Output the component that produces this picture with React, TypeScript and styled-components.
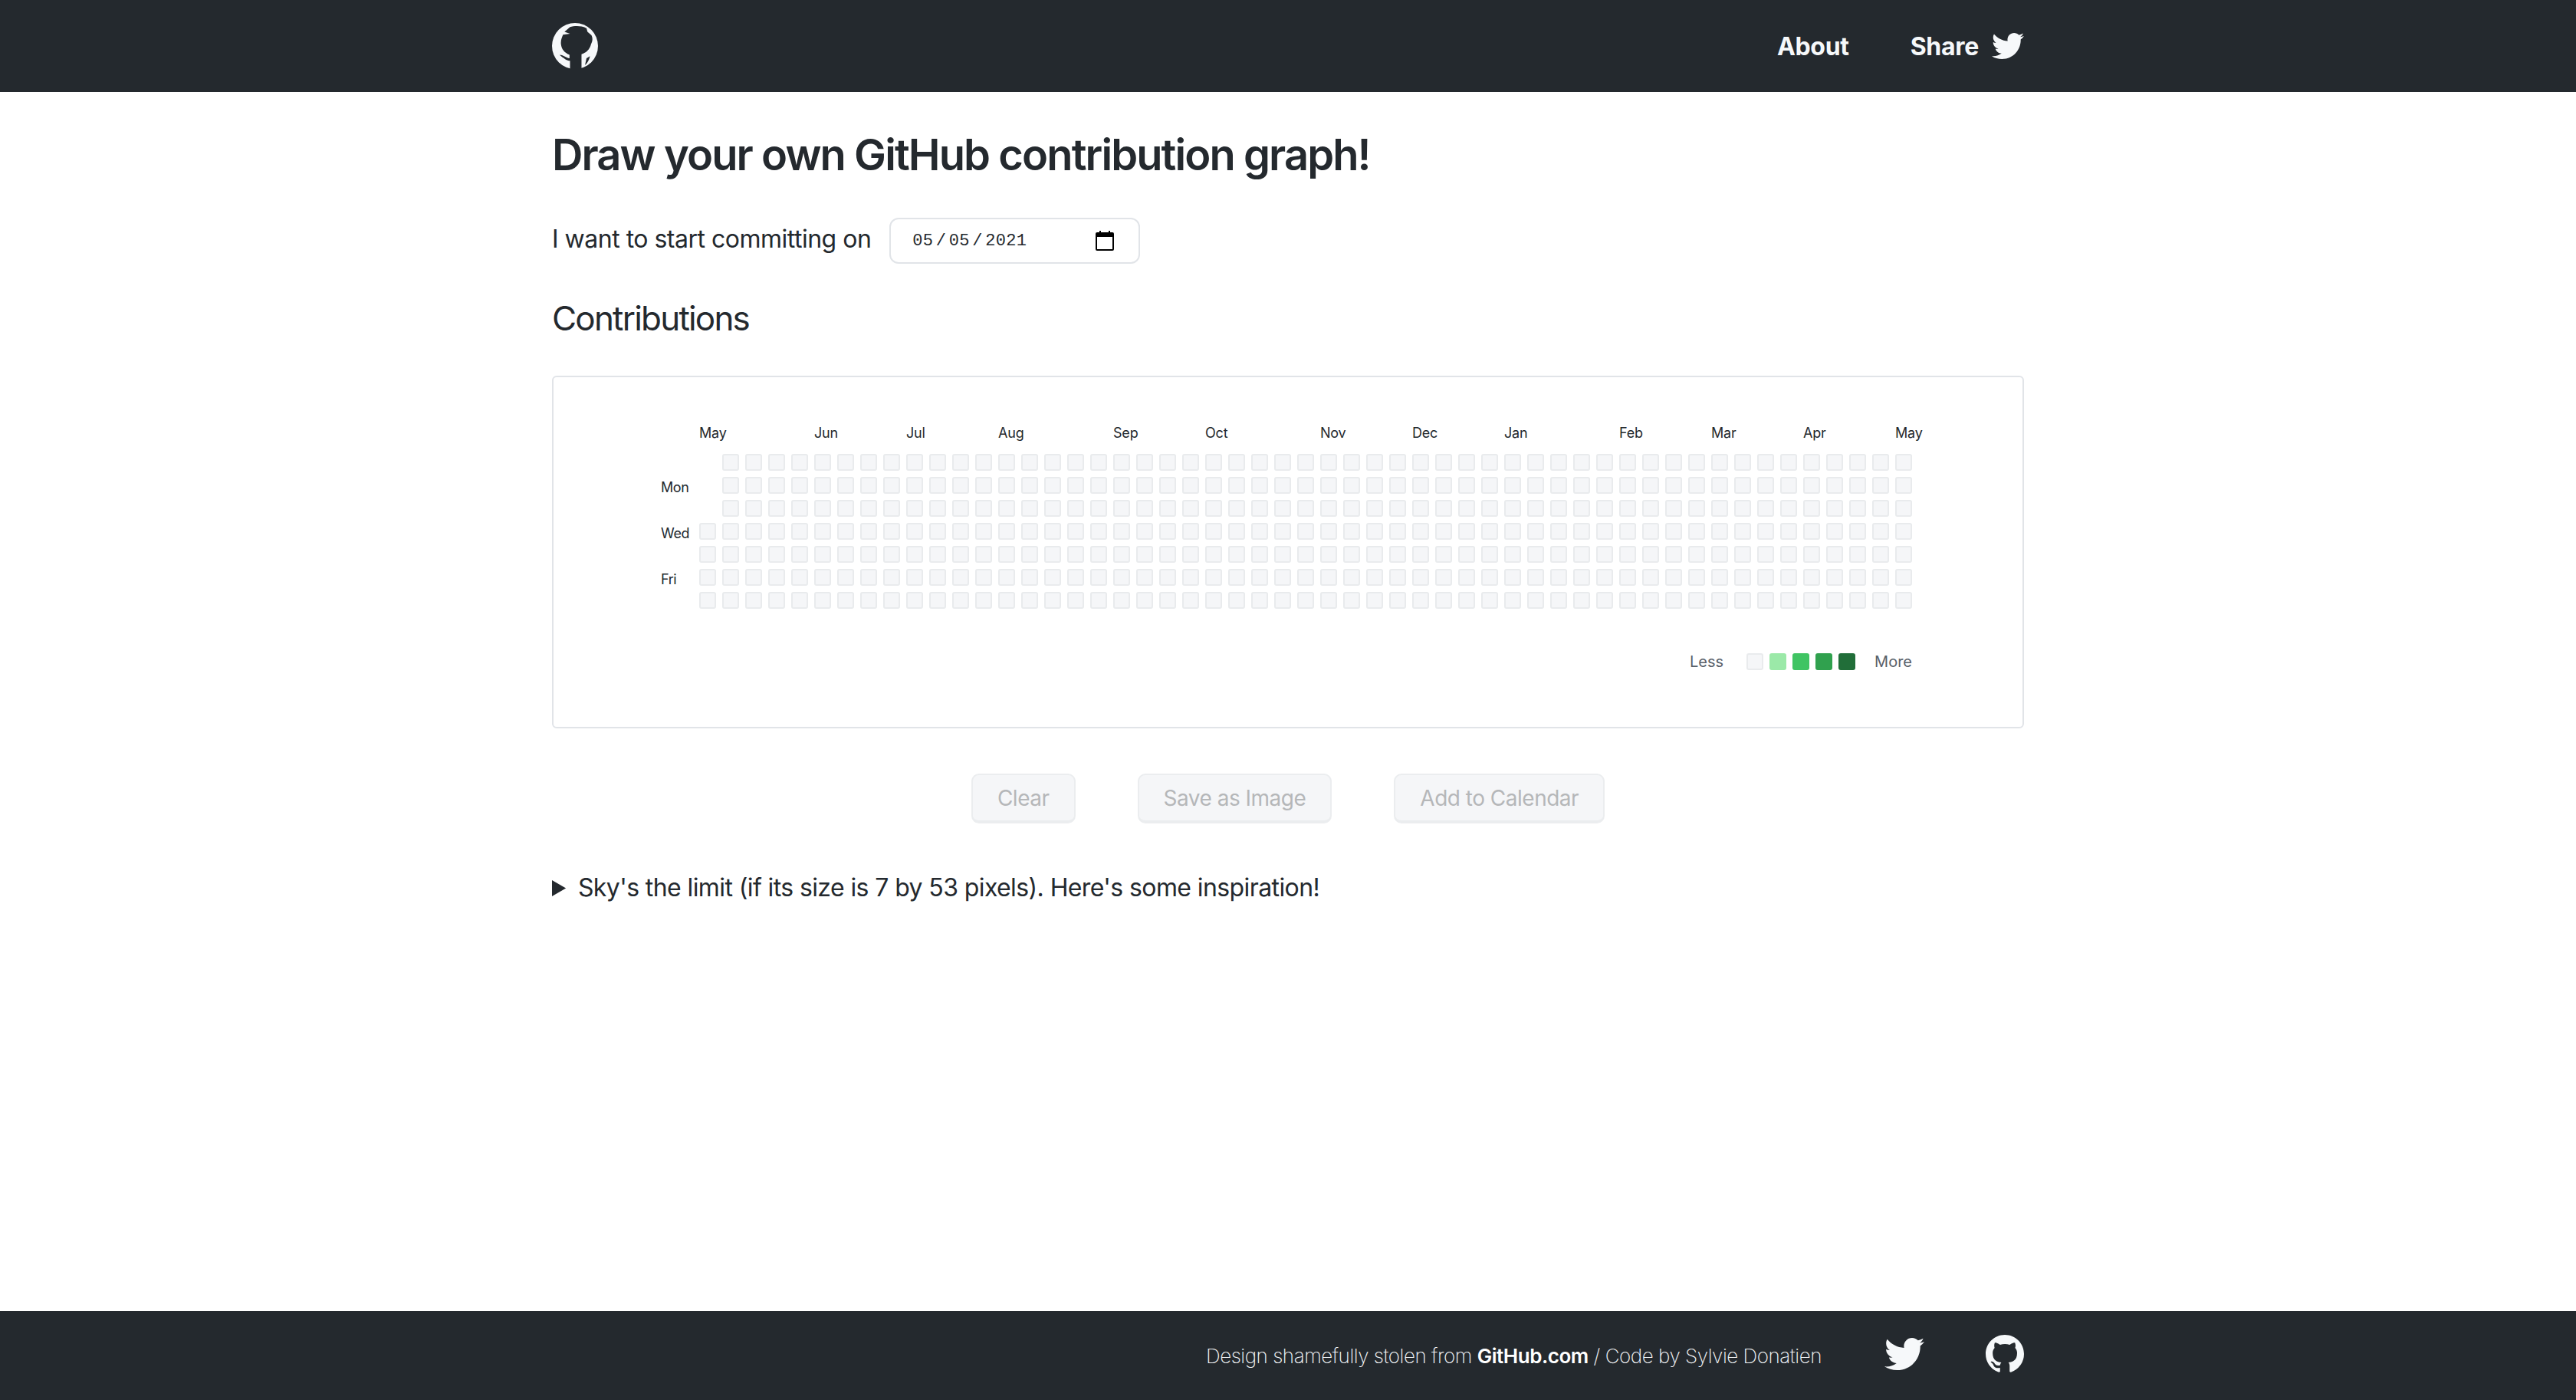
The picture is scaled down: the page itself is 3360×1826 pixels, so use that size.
import React from 'react';
import styled, { createGlobalStyle } from 'styled-components';
import { FaTwitter } from 'react-icons/fa';

const GITHUB_MARK =
  'M8 0C3.58 0 0 3.58 0 8c0 3.54 2.29 6.53 5.47 7.59.4.07.55-.17.55-.38 0-.19-.01-.82-.01-1.49-2.01.37-2.53-.49-2.69-.94-.09-.23-.48-.94-.82-1.13-.28-.15-.68-.52-.01-.53.63-.01 1.08.58 1.23.82.72 1.21 1.87.87 2.33.66.07-.52.28-.87.51-1.07-1.78-.2-3.64-.89-3.64-3.95 0-.87.31-1.59.82-2.15-.08-.2-.36-1.02.08-2.12 0 0 .67-.21 2.2.82.64-.18 1.32-.27 2-.27.68 0 1.36.09 2 .27 1.53-1.04 2.2-.82 2.2-.82.44 1.1.16 1.92.08 2.12.51.56.82 1.27.82 2.15 0 3.07-1.87 3.75-3.65 3.95.29.25.54.73.54 1.48 0 1.07-.01 1.93-.01 2.2 0 .21.15.46.55.38A8.013 8.013 0 0016 8c0-4.42-3.58-8-8-8z';

const MONTHS: { label: string; column: number }[] = [
  { label: 'May', column: 0 },
  { label: 'Jun', column: 5 },
  { label: 'Jul', column: 9 },
  { label: 'Aug', column: 13 },
  { label: 'Sep', column: 18 },
  { label: 'Oct', column: 22 },
  { label: 'Nov', column: 27 },
  { label: 'Dec', column: 31 },
  { label: 'Jan', column: 35 },
  { label: 'Feb', column: 40 },
  { label: 'Mar', column: 44 },
  { label: 'Apr', column: 48 },
  { label: 'May', column: 52 },
];

const DAY_LABELS = ['', 'Mon', '', 'Wed', '', 'Fri', ''];
const LEGEND = ['#f5f6f8', '#9be9a8', '#40c463', '#30a14e', '#216e39'];
const CELL_COUNT = 4 + 52 * 7;

const GlobalStyle = createGlobalStyle`
  html, body {
    margin: 0;
    padding: 0;
    background: #ffffff;
  }

  body {
    font-family: Inter, "Liberation Sans", sans-serif;
    color: #24292e;
  }
`;

const Page = styled.div`
  display: flex;
  flex-direction: column;
  height: 100vh;
  overflow: hidden;
`;

const Wrap = styled.div`
  width: 1920px;
  margin: 0 auto;
`;

const Header = styled.header`
  flex: none;
  height: 120px;
  background: #24292e;
  color: #f6f8fa;
`;

const HeaderInner = styled(Wrap)`
  height: 100%;
  display: flex;
  align-items: center;
  justify-content: space-between;
`;

const Nav = styled.nav`
  display: flex;
  align-items: center;
  gap: 80px;
`;

const NavLink = styled.a`
  display: flex;
  align-items: center;
  gap: 17px;
  font-size: 32px;
  font-weight: 700;
  letter-spacing: -0.3px;
  color: #f6f8fa;
`;

const Main = styled(Wrap)`
  flex: 1;
`;

const Title = styled.h1`
  margin: 42px 0 0;
  font-size: 56px;
  line-height: 80px;
  font-weight: 600;
  letter-spacing: -1.9px;
`;

const DateRow = styled.div`
  display: flex;
  align-items: center;
  gap: 24px;
  margin-top: 42px;
  font-size: 32px;
  letter-spacing: -0.5px;
`;

const DateLabel = styled.label`
  margin-bottom: 6px;
`;

const DateBox = styled.div`
  box-sizing: border-box;
  width: 327px;
  height: 60px;
  padding: 0 32px 0 28px;
  display: flex;
  align-items: center;
  justify-content: space-between;
  background: #ffffff;
  border: 2px solid #e1e4e8;
  border-radius: 12px;
`;

const DateValue = styled.span`
  font-family: "Liberation Mono", monospace;
  font-size: 22px;
  letter-spacing: 0.3px;
`;

const DateSlash = styled.span`
  margin: 0 3.5px;
`;

const SectionTitle = styled.h2`
  margin: 38px 0 0;
  font-size: 44px;
  line-height: 66px;
  font-weight: 400;
  letter-spacing: -1.8px;
`;

const Card = styled.div`
  box-sizing: border-box;
  height: 460px;
  margin-top: 42px;
  padding: 62px 0 0 140px;
  border: 2px solid #e1e4e8;
  border-radius: 6px;
`;

const Graph = styled.div`
  display: grid;
  grid-template-columns: 42px repeat(53, 22px);
  grid-template-rows: 30px repeat(7, 22px);
  gap: 8px;
  width: max-content;
`;

const MonthLabel = styled.span<{ $column: number }>`
  grid-row: 1;
  grid-column: ${p => p.$column + 2} / span 3;
  font-size: 18px;
  line-height: 22px;
  letter-spacing: -0.2px;
  white-space: nowrap;
`;

const DayLabel = styled.span<{ $row: number }>`
  grid-column: 1;
  grid-row: ${p => p.$row + 2};
  padding-top: 3px;
  font-size: 18px;
  line-height: 22px;
  letter-spacing: -0.4px;
`;

const CellGrid = styled.div`
  grid-column: 2 / span 53;
  grid-row: 2 / span 7;
  display: grid;
  grid-template-rows: repeat(7, 22px);
  grid-auto-flow: column;
  grid-auto-columns: 22px;
  gap: 8px;
`;

const Cell = styled.span<{ $color?: string; $border?: string }>`
  box-sizing: border-box;
  display: block;
  width: 22px;
  height: 22px;
  background: ${p => p.$color || '#f5f6f8'};
  border: 2px solid ${p => p.$border || '#e9ebed'};
  border-radius: 3px;
`;

const FirstCell = styled(Cell)`
  grid-row-start: 4;
`;

const Legend = styled.div`
  display: flex;
  align-items: center;
  justify-content: flex-end;
  width: 1632px;
  margin-top: 58px;
  color: #586069;
  font-size: 20px;
  line-height: 22px;
`;

const LegendCells = styled.div`
  display: flex;
  gap: 8px;
  margin: 0 25px 0 30px;
`;

const Actions = styled.div`
  display: flex;
  justify-content: center;
  gap: 81px;
  margin-top: 59px;
`;

const Button = styled.button`
  box-sizing: border-box;
  height: 65px;
  padding: 0 32px;
  font-family: inherit;
  font-size: 28px;
  letter-spacing: -0.5px;
  color: #b5b7b9;
  background: #f5f6f8;
  border: 2px solid #ebedef;
  border-bottom-width: 4px;
  border-radius: 10px;
`;

const Inspiration = styled.details`
  margin-top: 60px;
  font-size: 32px;
  line-height: 48px;
  letter-spacing: -0.6px;
`;

const Summary = styled.summary`
  cursor: pointer;
`;

const Footer = styled.footer`
  flex: none;
  height: 116px;
  background: #24292e;
  color: #f6f8fa;
`;

const FooterInner = styled(Wrap)`
  height: 100%;
  display: flex;
  align-items: center;
  justify-content: flex-end;
`;

const FooterText = styled.p`
  margin: 0 82px 0 0;
  font-size: 26px;
  font-weight: 200;
  letter-spacing: -0.47px;
`;

const FooterStrong = styled.a`
  font-weight: 600;
  color: #ffffff;
`;

const FooterIcons = styled.div`
  display: flex;
  align-items: center;
  gap: 80px;
  margin-bottom: 4px;
`;

const GithubMark: React.FC<{ size: number }> = ({ size }) => (
  <svg width={size} height={size} viewBox="0 0 16 16" fill="#f6f8fa" aria-hidden="true">
    <path fillRule="evenodd" d={GITHUB_MARK} />
  </svg>
);

// header logo: white ring with the cat cut out big
const Logo = () => (
  <svg width={60} height={60} viewBox="28 31 184 184" aria-hidden="true">
    <circle cx="120" cy="123" r="92" fill="#f6f8fa" />
    <path
      fill="#24292e"
      d="M100 47C120 41 150 42 166 52L170 66L186 80C192 92 190 106 184 116C180 134 166 150 146 156L146 215L100 215L100 182C88 182 76 172 66 165L58 158C72 158 84 170 98 172L98 158C78 150 66 136 64 116C62 100 68 88 72 78L100 74L78 66Z"
    />
    <path fill="#24292e" d="M160 200L166 172L180 164C176 180 170 192 160 200Z" />
  </svg>
);

const CalendarIcon = () => (
  <svg width={24} height={26} viewBox="0 0 24 26" aria-hidden="true">
    <path
      fill="#000"
      d="M5 0h2v2h10V0h2v2h3a2 2 0 0 1 2 2v20a2 2 0 0 1-2 2H2a2 2 0 0 1-2-2V4a2 2 0 0 1 2-2h3z"
    />
    <rect x="2" y="8" width="20" height="16" fill="#fff" />
  </svg>
);

const App: React.FC = () => {
  return (
    <>
      <GlobalStyle />
      <Page>
        <Header>
          <HeaderInner>
            <Logo />
            <Nav>
              <NavLink>About</NavLink>
              <NavLink>
                Share
                <FaTwitter size={42} color="#f6f8fa" />
              </NavLink>
            </Nav>
          </HeaderInner>
        </Header>
        <Main>
          <Title>Draw your own GitHub contribution graph!</Title>
          <DateRow>
            <DateLabel>I want to start committing on</DateLabel>
            <DateBox>
              <DateValue>
                05<DateSlash>/</DateSlash>05<DateSlash>/</DateSlash>2021
              </DateValue>
              <CalendarIcon />
            </DateBox>
          </DateRow>
          <SectionTitle>Contributions</SectionTitle>
          <Card>
            <Graph>
              {MONTHS.map(m => (
                <MonthLabel key={`${m.label}-${m.column}`} $column={m.column}>
                  {m.label}
                </MonthLabel>
              ))}
              {DAY_LABELS.map((d, i) =>
                d ? (
                  <DayLabel key={d} $row={i}>
                    {d}
                  </DayLabel>
                ) : null
              )}
              <CellGrid>
                <FirstCell />
                {Array.from({ length: CELL_COUNT - 1 }, (_, i) => (
                  <Cell key={i} />
                ))}
              </CellGrid>
            </Graph>
            <Legend>
              Less
              <LegendCells>
                {LEGEND.map((c, i) => (
                  <Cell key={c} $color={c} $border={i === 0 ? '#e9ebed' : c} />
                ))}
              </LegendCells>
              More
            </Legend>
          </Card>
          <Actions>
            <Button disabled>Clear</Button>
            <Button disabled>Save as Image</Button>
            <Button disabled>Add to Calendar</Button>
          </Actions>
          <Inspiration>
            <Summary>Sky's the limit (if its size is 7 by 53 pixels). Here's some inspiration!</Summary>
          </Inspiration>
        </Main>
        <Footer>
          <FooterInner>
            <FooterText>
              Design shamefully stolen from <FooterStrong>GitHub.com</FooterStrong> / Code by Sylvie Donatien
            </FooterText>
            <FooterIcons>
              <FaTwitter size={52} color="#f6f8fa" />
              <GithubMark size={50} />
            </FooterIcons>
          </FooterInner>
        </Footer>
      </Page>
    </>
  );
};

export default App;
